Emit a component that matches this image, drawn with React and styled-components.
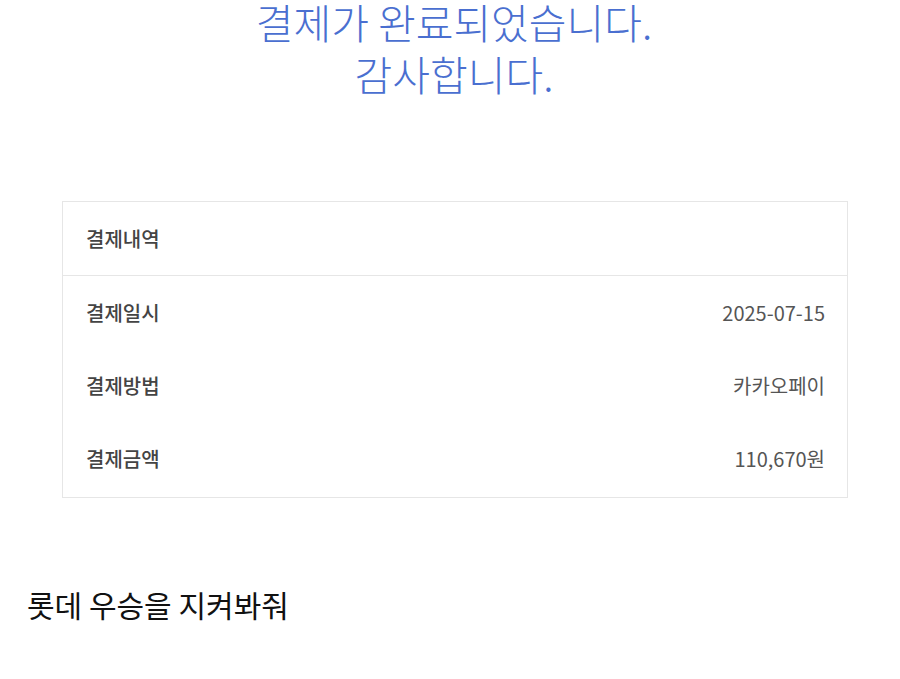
import React from "react"
import styled, { createGlobalStyle } from "styled-components"

const GlobalStyle = createGlobalStyle`
  html, body {
    margin: 0;
    padding: 0;
    background: #ffffff;
  }
  body {
    font-family: "Noto Sans CJK KR", "Noto Sans", sans-serif;
  }
`

const Page = styled.div`
  width: 900px;
  height: 679px;
  display: flex;
  flex-direction: column;
  overflow: hidden;
`

const Title = styled.h1`
  margin: -5px 0 0;
  padding-left: 8px;
  text-align: center;
  font-family: "Noto Sans CJK KR", sans-serif;
  font-weight: 300;
  font-size: 41px;
  line-height: 52px;
  color: #4a6fd0;
`

const Card = styled.section`
  margin: 102px 52px 0 62px;
  border: 1px solid #e6e6e6;
  background: #fff;
`

const CardHeader = styled.div`
  height: 73px;
  display: flex;
  align-items: center;
  padding: 0 23px;
  border-bottom: 1px solid #e6e6e6;
  font-size: 20px;
  font-weight: 500;
  color: #444;
`

const CardBody = styled.div`
  padding-bottom: 2px;
`

const Row = styled.div`
  height: 73px;
  display: flex;
  align-items: center;
  justify-content: space-between;
  padding: 0 22px 0 23px;
  font-size: 20px;
`

const Label = styled.span`
  font-weight: 500;
  color: #444;
`

const Value = styled.span`
  font-weight: 400;
  color: #555;
`

const Caption = styled.p`
  margin: 88px 0 0 27px;
  font-family: "Noto Sans CJK KR", sans-serif;
  font-size: 30px;
  line-height: 36px;
  color: #111;
`

const rows = [
  { label: "결제일시", value: "2025-07-15" },
  { label: "결제방법", value: "카카오페이" },
  { label: "결제금액", value: "110,670원" },
]

const App = () => (
  <>
    <GlobalStyle />
    <Page>
      <Title>
        결제가 완료되었습니다.
        <br />
        감사합니다.
      </Title>
      <Card>
        <CardHeader>결제내역</CardHeader>
        <CardBody>
          {rows.map(r => (
            <Row key={r.label}>
              <Label>{r.label}</Label>
              <Value>{r.value}</Value>
            </Row>
          ))}
        </CardBody>
      </Card>
      <Caption>롯데 우승을 지켜봐줘</Caption>
    </Page>
  </>
)

export default App
